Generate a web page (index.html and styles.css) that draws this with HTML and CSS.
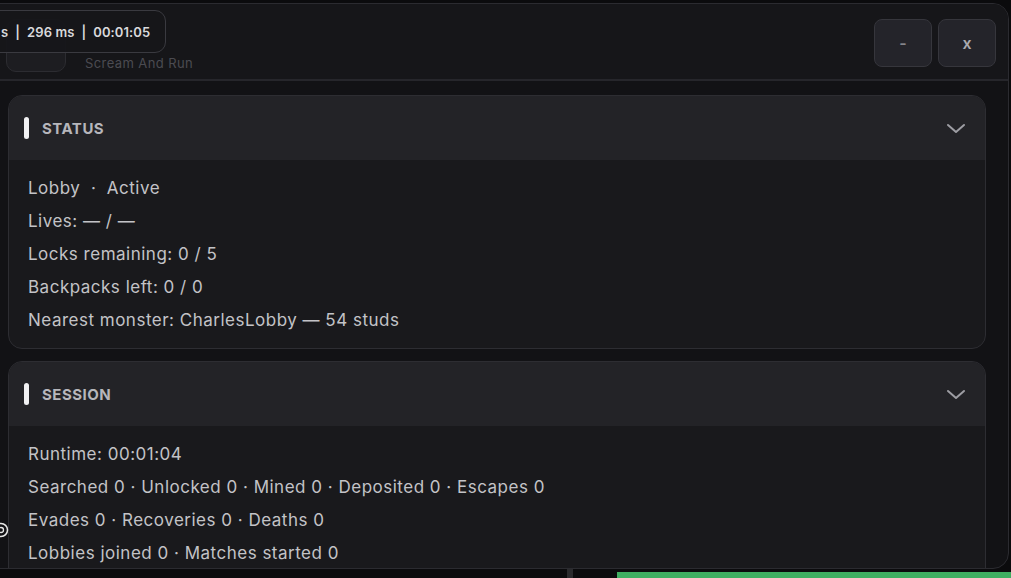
FILE: index.html
```html
<!DOCTYPE html>
<html>
<head>
<meta charset="utf-8">
<link rel="stylesheet" href="styles.css">
</head>
<body>
<div class="page">
  <div class="window">
    <header class="topbar">
      <div class="brand">
        <div class="logo-box"></div>
        <div class="brand-text">
          <div class="brand-sub">Scream And Run</div>
        </div>
      </div>
      <div class="win-buttons">
        <button class="win-btn win-min">-</button>
        <button class="win-btn">x</button>
      </div>
    </header>
    <main class="content">
      <section class="card">
        <div class="card-head">
          <span class="accent"></span>
          <span class="card-title">STATUS</span>
          <svg class="chev" width="20" height="11" viewBox="0 0 20 11"><path d="M2 2 L10 9 L18 2" fill="none" stroke="#9d9da3" stroke-width="2" stroke-linecap="round" stroke-linejoin="round"/></svg>
        </div>
        <div class="card-body">
          <div class="line">Lobby &nbsp;·&nbsp; Active</div>
          <div class="line">Lives: — / —</div>
          <div class="line">Locks remaining: 0 / 5</div>
          <div class="line">Backpacks left: 0 / 0</div>
          <div class="line">Nearest monster: CharlesLobby — 54 studs</div>
        </div>
      </section>
      <section class="card">
        <div class="card-head">
          <span class="accent"></span>
          <span class="card-title">SESSION</span>
          <svg class="chev" width="20" height="11" viewBox="0 0 20 11"><path d="M2 2 L10 9 L18 2" fill="none" stroke="#9d9da3" stroke-width="2" stroke-linecap="round" stroke-linejoin="round"/></svg>
        </div>
        <div class="card-body">
          <div class="line">Runtime: 00:01:04</div>
          <div class="line">Searched 0 · Unlocked 0 · Mined 0 · Deposited 0 · Escapes 0</div>
          <div class="line">Evades 0 · Recoveries 0 · Deaths 0</div>
          <div class="line">Lobbies joined 0 · Matches started 0</div>
        </div>
      </section>
    </main>
  </div>
  <div class="bottom-strip">
    <span class="stub"></span>
    <span class="green-bar"></span>
  </div>
  <div class="stats-pill"><span>s</span><span class="sep">|</span><span>296 ms</span><span class="sep">|</span><span>00:01:05</span></div>
  <svg class="side-icon" width="16" height="16" viewBox="0 0 16 16"><circle cx="8" cy="8" r="6.5" fill="none" stroke="#e8e8e8" stroke-width="1.5"/><circle cx="8" cy="8" r="2.5" fill="none" stroke="#e8e8e8" stroke-width="1.3"/></svg>
</div>
</body>
</html>
```

FILE: styles.css
```css
* { box-sizing: border-box; }
html, body { margin: 0; padding: 0; }
body {
  background: #0b0b0d;
  font-family: "Inter", "DejaVu Sans", sans-serif;
  overflow: hidden;
}
.page {
  position: relative;
  width: 1011px;
  height: 578px;
  overflow: hidden;
  padding-top: 3px;
}
.window {
  width: 1011px;
  height: 566px;
  margin-left: -2px;
  background: #121215;
  border: 1px solid #2b2b30;
  border-radius: 0 16px 16px 0;
  overflow: hidden;
  display: flex;
  flex-direction: column;
}
.topbar {
  height: 77px;
  flex: none;
  display: flex;
  align-items: flex-start;
  justify-content: space-between;
  background: #161619;
  border-bottom: 2px solid #26262b;
  padding: 15px 12px 0 7px;
}
.brand { display: flex; gap: 19px; }
.logo-box {
  width: 60px;
  height: 53px;
  background: #1d1d21;
  border: 1px solid #2c2c31;
  border-radius: 10px;
}
.brand-text { padding-top: 36px; }
.brand-sub { font-size: 13px; color: #4b4b51; letter-spacing: 0.4px; }
.win-buttons { display: flex; gap: 6px; }
.win-btn {
  width: 58px;
  height: 48px;
  background: #24242a;
  border: 1px solid #36363c;
  border-radius: 8px;
  color: #a9a9ae;
  font-family: "Inter", sans-serif;
  font-size: 16px;
  font-weight: 600;
}
.win-min { color: #85858b; }
.content {
  flex: 1;
  overflow: hidden;
  padding: 14px 22px 0 9px;
  display: flex;
  flex-direction: column;
  gap: 12px;
}
.card {
  flex: none;
  border: 1px solid #2d2d32;
  border-radius: 14px;
  overflow: hidden;
  background: #19191c;
}
.card-head {
  height: 64px;
  background: #232327;
  display: flex;
  align-items: center;
  padding: 0 19px 0 15px;
}
.accent {
  width: 5px;
  height: 22px;
  border-radius: 3px;
  background: #f1f1f3;
}
.card-title {
  margin-left: 13px;
  font-size: 15px;
  font-weight: 700;
  color: #b6b6bb;
  letter-spacing: 0.5px;
}
.chev { margin-left: auto; }
.card-body {
  padding: 12px 19px 11px;
}
.line {
  height: 33px;
  line-height: 33px;
  font-size: 17px;
  letter-spacing: 0.5px;
  color: #c3c3c7;
  white-space: nowrap;
}
.bottom-strip {
  height: 9px;
  display: flex;
  align-items: flex-end;
}
.stub {
  width: 6px;
  height: 9px;
  margin-left: 567px;
  background: #2a2a2d;
}
.green-bar {
  width: 394px;
  height: 6px;
  margin-left: 44px;
  background: #3fae61;
}
.stats-pill {
  position: absolute;
  top: 10px;
  left: -14px;
  width: 180px;
  height: 43px;
  padding: 0 14px;
  display: flex;
  align-items: center;
  white-space: nowrap;
  font-size: 13px;
  font-weight: 600;
  letter-spacing: 0.1px;
  color: #d9d9dc;
  background: rgba(22, 22, 26, 0.94);
  border: 1px solid #3a3a40;
  border-radius: 11px;
}
.sep { margin: 0 7px; }
.side-icon {
  position: absolute;
  left: -7px;
  top: 522px;
}
```
